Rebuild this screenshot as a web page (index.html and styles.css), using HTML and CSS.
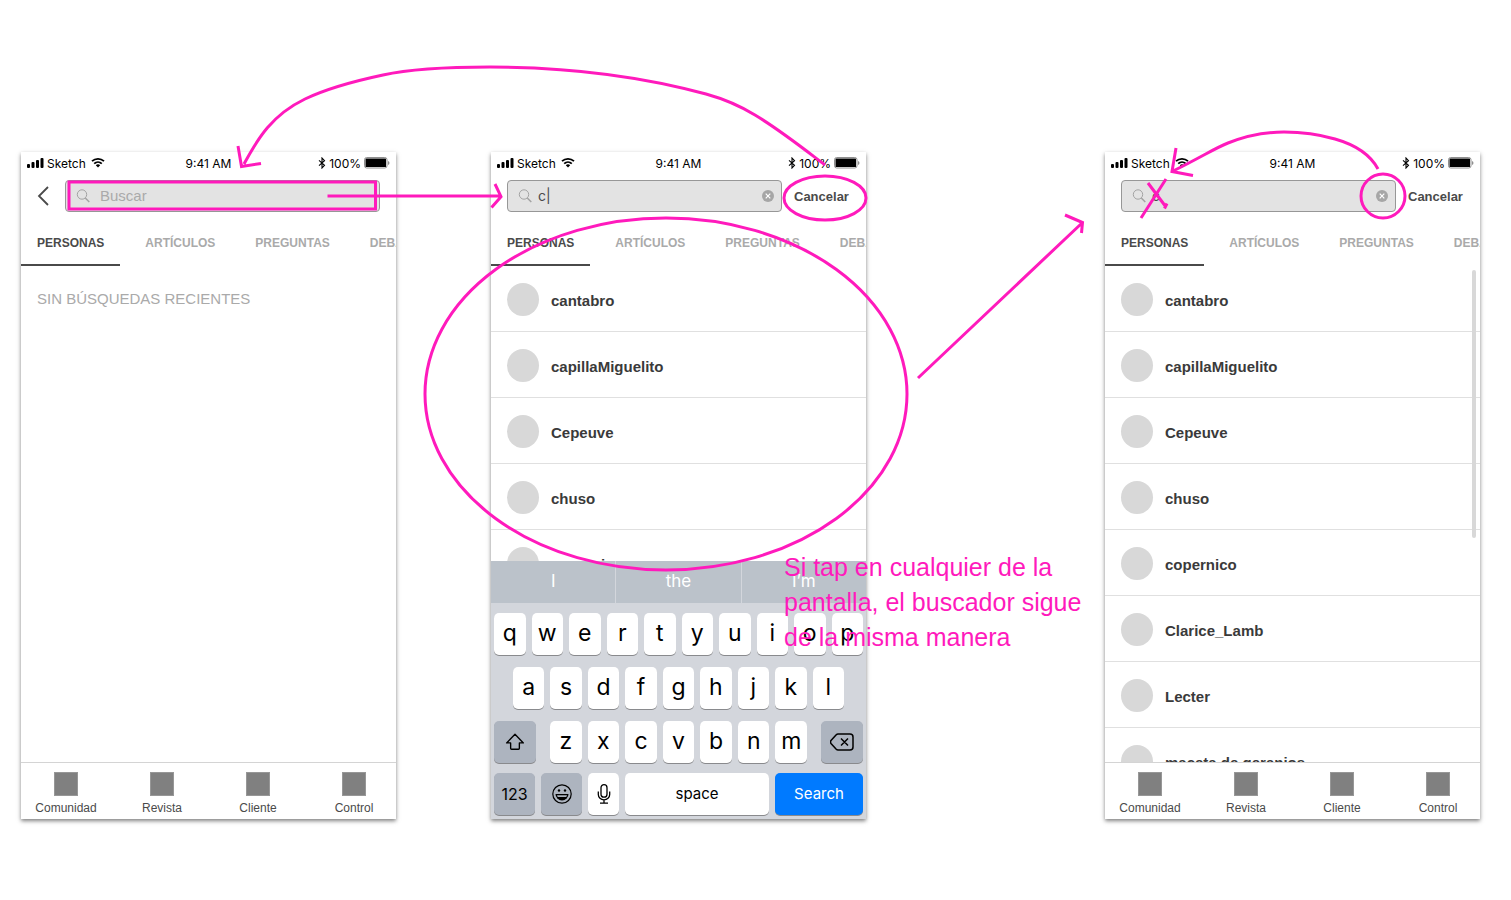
FILE: index.html
```html
<!DOCTYPE html>
<html lang="es">
<head>
<meta charset="utf-8">
<title>Buscador – flujo</title>
<link rel="stylesheet" href="styles.css">
</head>
<body>
<svg class="sprite" aria-hidden="true">
  <symbol id="signal" viewBox="0 0 17 11"><rect x="0" y="7" width="3" height="4" rx="1"/><rect x="4.500" y="5" width="3" height="6" rx="1"/><rect x="9" y="3" width="3" height="8" rx="1"/><rect x="13.500" y="1" width="3" height="10" rx="1"/></symbol>
  <symbol id="wifi" viewBox="0 0 14 11"><path d="M1 4.200a8.700 8.700 0 0 1 12 0M3.200 6.600a5.500 5.500 0 0 1 7.600 0" fill="none" stroke="#000" stroke-width="1.800"/><path d="M4.800 8.300a3.200 3.200 0 0 1 4.400 0L7 10.600z"/></symbol>
  <symbol id="bt" viewBox="0 0 8 12"><path d="M1 3.400 6.500 8.400 4 11V1l2.500 2.600L1 8.600" fill="none" stroke="#000" stroke-width="1.100"/></symbol>
  <symbol id="battery" viewBox="0 0 26 12"><rect x=".5" y=".5" width="22.500" height="10.500" rx="2.200" fill="#fff" stroke="#8f8f8f"/><rect x="1.500" y="1.500" width="20.500" height="8.500" rx=".6"/><path d="M24 4v4q1.500-.6 1.500-2T24 4" fill="#8f8f8f"/></symbol>
  <symbol id="lens" viewBox="0 0 14 14"><circle cx="6" cy="5.500" r="4.700" fill="none" stroke="#a3a3a3"/><path d="m9.300 9 4 4" fill="none" stroke="#a3a3a3" stroke-width="1.500"/></symbol>
  <symbol id="clear" viewBox="0 0 12 12"><circle cx="6" cy="6" r="6" fill="#a6a6a6"/><path d="m3.700 3.700 4.600 4.600m0-4.600L3.700 8.300" stroke="#fff" stroke-width="1.200"/></symbol>
</svg>

<main class="canvas">
  <section class="phone phone-empty" aria-label="Búsqueda vacía">
    <header class="status">
      <div class="status-left"><svg class="i-signal"><use href="#signal"/></svg><span>Sketch</span><svg class="i-wifi"><use href="#wifi"/></svg></div>
      <span>9:41 AM</span>
      <div class="status-right"><svg class="i-bt"><use href="#bt"/></svg><span>100%</span><svg class="i-battery"><use href="#battery"/></svg></div>
    </header>
    <div class="search search-back">
      <button class="back" aria-label="Atrás"><svg viewBox="0 0 12 20"><path d="M11 1 2 10l9 9" fill="none" stroke="#4a4a4a" stroke-width="1.800"/></svg></button>
      <label class="field field-wide"><svg class="i-lens"><use href="#lens"/></svg><input type="text" placeholder="Buscar" aria-label="Buscar"></label>
    </div>
    <nav class="tabs"><button class="tab active">PERSONAS</button><button class="tab">ARTÍCULOS</button><button class="tab">PREGUNTAS</button><button class="tab">DEBATES</button></nav>
    <div class="results"><p class="empty">SIN BÚSQUEDAS RECIENTES</p></div>
    <nav class="bottom"><a href="#">Comunidad</a><a href="#">Revista</a><a href="#">Cliente</a><a href="#">Control</a></nav>
  </section>

  <section class="phone phone-typing" aria-label="Escribiendo">
    <header class="status">
      <div class="status-left"><svg class="i-signal"><use href="#signal"/></svg><span>Sketch</span><svg class="i-wifi"><use href="#wifi"/></svg></div>
      <span>9:41 AM</span>
      <div class="status-right"><svg class="i-bt"><use href="#bt"/></svg><span>100%</span><svg class="i-battery"><use href="#battery"/></svg></div>
    </header>
    <div class="search">
      <div class="field"><svg class="i-lens"><use href="#lens"/></svg><input class="typed" type="text" value="c|" aria-label="Buscar"><button class="clear" aria-label="Borrar"><svg><use href="#clear"/></svg></button></div>
      <button class="cancel">Cancelar</button>
    </div>
    <nav class="tabs"><button class="tab active">PERSONAS</button><button class="tab">ARTÍCULOS</button><button class="tab">PREGUNTAS</button><button class="tab">DEBATES</button></nav>
    <ul class="results"><li>cantabro</li><li>capillaMiguelito</li><li>Cepeuve</li><li>chuso</li><li>copernico</li></ul>
    <div class="keyboard">
      <div class="hints"><button>I</button><button>the</button><button>I’m</button></div>
      <div class="keys">
        <div class="row"><button>q</button><button>w</button><button>e</button><button>r</button><button>t</button><button>y</button><button>u</button><button>i</button><button>o</button><button>p</button></div>
        <div class="row row-home"><button>a</button><button>s</button><button>d</button><button>f</button><button>g</button><button>h</button><button>j</button><button>k</button><button>l</button></div>
        <div class="row">
          <button class="mod" aria-label="Mayúsculas"><svg class="i-key" viewBox="0 0 22 20"><path d="M11 1.500 1.800 11h4.400v6q0 1 1 1h7.600q1 0 1-1v-6h4.400z" fill="none" stroke="#000" stroke-width="1.500" stroke-linejoin="round"/></svg></button>
          <div class="row letters"><button>z</button><button>x</button><button>c</button><button>v</button><button>b</button><button>n</button><button>m</button></div>
          <button class="mod" aria-label="Retroceso"><svg class="i-del" viewBox="0 0 24 18"><path d="M8 1h12q3 0 3 3v10q0 3-3 3H8Q7 17 6 16L1 10.500Q0 9 1 7.500L6 2Q7 1 8 1zm3 4.500 7 7m0-7-7 7" fill="none" stroke="#000" stroke-width="1.500"/></svg></button>
        </div>
        <div class="row row-last">
          <button class="mod">123</button>
          <button class="mod" aria-label="Emoji"><svg class="i-key" viewBox="0 0 20 20"><circle cx="10" cy="10" r="9.200" fill="none" stroke="#000" stroke-width="1.200"/><circle cx="7" cy="6.500" r="1.200"/><circle cx="13" cy="6.500" r="1.200"/><path d="M3.500 10h13a6.500 6.500 0 0 1-13 0z"/><path d="M5 11.300h10q-.3 1.400-1 1.700H6q-.7-.3-1-1.700z" fill="#adb4bf"/></svg></button>
          <button class="mic" aria-label="Dictado"><svg class="i-key" viewBox="0 0 20 20"><rect x="7" y=".7" width="6" height="12.500" rx="3" fill="none" stroke="#000" stroke-width="1.300"/><path d="M4.300 7.500v3a5.700 5.300 0 0 0 11.400 0v-3M10 16v3M6 19.200h8" fill="none" stroke="#000" stroke-width="1.300"/></svg></button>
          <button class="space">space</button>
          <button class="go">Search</button>
        </div>
      </div>
    </div>
  </section>

  <section class="phone phone-results" aria-label="Resultados">
    <header class="status">
      <div class="status-left"><svg class="i-signal"><use href="#signal"/></svg><span>Sketch</span><svg class="i-wifi"><use href="#wifi"/></svg></div>
      <span>9:41 AM</span>
      <div class="status-right"><svg class="i-bt"><use href="#bt"/></svg><span>100%</span><svg class="i-battery"><use href="#battery"/></svg></div>
    </header>
    <div class="search">
      <div class="field"><svg class="i-lens"><use href="#lens"/></svg><input class="typed" type="text" value="c" aria-label="Buscar"><button class="clear" aria-label="Borrar"><svg><use href="#clear"/></svg></button></div>
      <button class="cancel">Cancelar</button>
    </div>
    <nav class="tabs"><button class="tab active">PERSONAS</button><button class="tab">ARTÍCULOS</button><button class="tab">PREGUNTAS</button><button class="tab">DEBATES</button></nav>
    <ul class="results scrolling"><li>cantabro</li><li>capillaMiguelito</li><li>Cepeuve</li><li>chuso</li><li>copernico</li><li>Clarice_Lamb</li><li>Lecter</li><li>maceta de geranios</li></ul>
    <nav class="bottom"><a href="#">Comunidad</a><a href="#">Revista</a><a href="#">Cliente</a><a href="#">Control</a></nav>
  </section>

  <svg class="marks" aria-hidden="true">
    <rect x="69" y="182" width="306.500" height="27"/>
    <path d="M327.500 196H501M495 184l6 12.700-9.500 10.800"/>
    <ellipse cx="825" cy="198" rx="41" ry="22"/>
    <ellipse cx="666" cy="394" rx="241" ry="176"/>
    <path d="M918 378 1082 223M1065 215l17.500 7.500-1 10.500"/>
    <path d="M825 165C800 146 780 130 755 115C737 104 724 99 706 94C640 76 565 67 490 67C445 67 410 69 383 75C350 82 326 89 305 99C272 115 258 138 244 164M238 146l3.500 20.500 19.500-3"/>
    <path d="M1378 169C1370 154 1356 145 1335 139C1318 134 1300 132 1284 132C1263 132 1243 137 1228 143C1215 148 1200 158 1172 171.500M1176 148l-4 23.500 21 4"/>
    <circle cx="1383" cy="196" r="22"/>
    <path d="M1166 179 1141 218M1148 183l18 24M1164.500 208.500l2.500-5"/>
  </svg>
  <p class="note">Si tap en cualquier de la pantalla, el buscador sigue de la misma manera</p>
</main>
</body>
</html>
```
FILE: styles.css
```css
*, *::before, *::after { box-sizing: border-box; }
body { margin: 0; background: #fff; font-family: "Liberation Sans", Arial, sans-serif; color: #4a4a4a; }
button { border: 0; padding: 0; margin: 0; background: none; color: inherit; font: inherit; }
ul, p { margin: 0; padding: 0; list-style: none; }
svg { display: block; flex: none; }
.sprite { position: absolute; width: 0; height: 0; }

/* Free canvas: artboards and hand-drawn marks are pinned to it */
.canvas { position: relative; min-height: 100vh; overflow: hidden; }
.phone { position: absolute; top: 152px; width: 375px; height: 667px; display: flex; flex-direction: column; background: #fff; box-shadow: 0 2px 4px rgba(0, 0, 0, .5); }
.phone-empty { left: 21px; }
.phone-typing { left: 491px; }
.phone-results { left: 1105px; }

.status { display: grid; grid-template-columns: 1fr auto 1fr; align-items: center; height: 20px; padding: 4px 6px 0; font: 12px/16px Inter, sans-serif; color: #000; }
.status-left, .status-right { display: flex; align-items: center; gap: 3px; }
.status-right { justify-content: flex-end; }
.i-signal { width: 17px; height: 11px; margin-bottom: 4px; }
.i-wifi { width: 14px; height: 11px; margin: 0 0 4px 2px; }
.i-bt { width: 8px; height: 12px; margin-bottom: 3px; }
.i-battery { width: 26px; height: 12px; margin-bottom: 3px; }

.search { display: flex; align-items: center; height: 48px; padding: 0 16px; gap: 12px; }
.search-back { gap: 16px; }
.back { width: 12px; height: 20px; }
.back svg { width: 12px; height: 20px; }
.field { flex: 1; display: flex; align-items: center; gap: 6px; height: 32px; padding: 0 7px 0 10px; background: #e3e3e3; border: 1px solid #979797; border-radius: 4px; }
.field-wide { gap: 10px; }
.i-lens { width: 14px; height: 14px; }
.field input { flex: 1; min-width: 0; border: 0; padding: 0; outline: 0; background: none; font: 15px/20px "Liberation Sans", Arial, sans-serif; color: #4a4a4a; }
.field input::placeholder { color: #aaa; opacity: 1; }
.field .typed { font: 14px/20px Inter, sans-serif; }
.clear svg { width: 12px; height: 12px; }
.cancel { width: 56px; padding-top: 1px; text-align: left; font-size: 13px; font-weight: bold; line-height: 16px; }

.tabs { display: flex; gap: 8px; height: 46px; overflow: hidden; }
.tab { flex: none; padding: 2px 16px 0; font-size: 12px; line-height: 42px; font-weight: bold; color: #aaa; border-bottom: 2px solid transparent; }
.tab.active { margin-right: 1px; color: #4a4a4a; border-color: #4a4a4a; }

.results { position: relative; flex: 1; min-height: 0; overflow: hidden; }
.results li { display: flex; align-items: center; gap: 12px; height: 66px; padding: 4px 16px 0; border-bottom: 1px solid #e0e0e0; font-size: 15px; font-weight: bold; color: #3a3a3a; }
.results li::before { content: ""; width: 32px; height: 33px; margin-bottom: 3px; border-radius: 50%; background: #d8d8d8; }
.scrolling::after { content: ""; position: absolute; top: 4px; right: 4px; width: 4px; height: 268px; border-radius: 2px; background: #d8d8d8; }
.empty { padding: 24px 16px; font-size: 15px; line-height: 18px; color: #aaa; }

.bottom { display: flex; justify-content: space-between; height: 57px; padding: 9px 10px 0 13px; border-top: 1px solid #d4d4d4; background: #fff; }
.bottom a { display: flex; flex-direction: column; align-items: center; gap: 5px; width: 64px; font-size: 12px; line-height: 14px; color: #4a4a4a; text-decoration: none; }
.bottom a::before { content: ""; width: 24px; height: 24px; background: #808080; border: 1px solid #979797; }

.keyboard { background: #d3d6dc; font-family: Inter, sans-serif; color: #000; }
.hints { display: grid; grid-template-columns: repeat(3, 1fr); gap: 1px; height: 42px; background: #d3d6dc; }
.hints button { background: #bbc2ca; padding-bottom: 2px; color: #fff; font-size: 17px; }
.keys { display: flex; flex-direction: column; gap: 12px; padding: 10px 3px 4px; }
.row { display: flex; gap: 6px; }
.row-home { padding: 0 19px; }
.row button { flex: 1; min-width: 0; height: 42px; padding-bottom: 2px; display: flex; align-items: center; justify-content: center; border-radius: 5px; background: #fff; box-shadow: 0 1px 0 #898a8d; font-size: 23px; line-height: 28px; }
.letters { flex: 1; margin: 0 8px; }
.row .mod { flex: 0 0 42px; background: #adb4bf; font-size: 16px; padding: 0; }
.row-last { margin-top: -2px; }
.row-last .mod { flex-basis: 41px; }
.row .mic { flex: 0 0 31px; padding: 0; }
.row .space { font-size: 15px; padding: 0; }
.row .go { flex: 0 0 88px; padding: 0; background: #007aff; color: #fff; font-size: 15px; }
.i-key { width: 20px; height: 20px; }
.i-del { width: 24px; height: 18px; }

.marks { position: absolute; inset: 0; width: 100%; height: 100%; fill: none; stroke: #ff1abc; stroke-width: 3; pointer-events: none; }
.note { position: absolute; top: 550px; left: 784px; width: 310px; font-size: 25px; line-height: 35px; color: #ff1abc; }
```
